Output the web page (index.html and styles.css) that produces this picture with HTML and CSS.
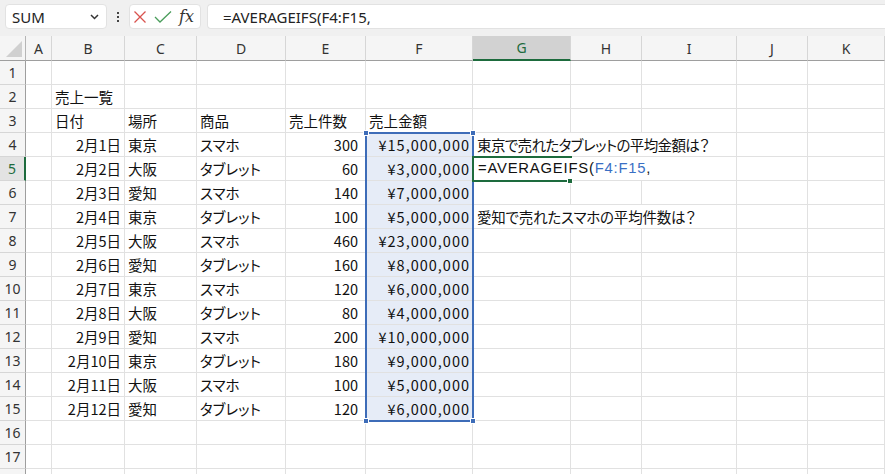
FILE: index.html
```html
<!DOCTYPE html>
<html lang="ja">
<head>
<meta charset="utf-8">
<link rel="stylesheet" href="styles.css">
</head>
<body>
<div class="app">
  <div class="fbar">
    <div class="namebox"><span>SUM</span>
      <svg class="chev" width="9" height="6" viewBox="0 0 9 6"><path d="M1 1l3.5 3.5L8 1" fill="none" stroke="#333" stroke-width="1.5"/></svg>
    </div>
    <div class="dots"><i></i><i></i><i></i></div>
    <div class="fxbox">
      <svg width="14" height="14" viewBox="0 0 14 14"><path d="M1.5 1.5l11 11M12.5 1.5l-11 11" stroke="#d9534f" stroke-width="1.3" fill="none"/></svg>
      <svg width="18" height="14" viewBox="0 0 18 14"><path d="M1 7l5 5L17 1.5" stroke="#4a9d5b" stroke-width="1.3" fill="none"/></svg>
      <span class="fx">fx</span>
    </div>
    <div class="formula">=AVERAGEIFS(F4:F15,</div>
  </div>
  <div class="sheet">
    <div class="grid">
      <div class="corner"><span class="tri"></span></div>
      <div class="ch">A</div><div class="ch">B</div><div class="ch">C</div><div class="ch">D</div><div class="ch">E</div><div class="ch">F</div><div class="ch hl">G</div><div class="ch">H</div><div class="ch">I</div><div class="ch">J</div><div class="ch">K</div>

      <div class="rh">1</div><div class="c"></div><div class="c"></div><div class="c"></div><div class="c"></div><div class="c"></div><div class="c"></div><div class="c"></div><div class="c"></div><div class="c"></div><div class="c"></div><div class="c"></div>

      <div class="rh">2</div><div class="c"></div><div class="c">売上一覧</div><div class="c"></div><div class="c"></div><div class="c"></div><div class="c"></div><div class="c"></div><div class="c"></div><div class="c"></div><div class="c"></div><div class="c"></div>

      <div class="rh">3</div><div class="c"></div><div class="c">日付</div><div class="c">場所</div><div class="c">商品</div><div class="c">売上件数</div><div class="c">売上金額</div><div class="c"></div><div class="c"></div><div class="c"></div><div class="c"></div><div class="c"></div>

      <div class="rh">4</div><div class="c"></div><div class="c r">2月1日</div><div class="c">東京</div><div class="c">スマホ</div><div class="c r e">300</div><div class="c r f sel">¥15,000,000</div><div class="c span3 q1">東京で売れたタブレットの平均金額は？</div><div class="c"></div><div class="c"></div>

      <div class="rh hlr">5</div><div class="c"></div><div class="c r">2月2日</div><div class="c">大阪</div><div class="c">タブレット</div><div class="c r e">60</div><div class="c r f sel">¥3,000,000</div><div class="c span3 edit">=AVERAGEIFS(<span class="ref">F4:F15</span>,</div><div class="c"></div><div class="c"></div>

      <div class="rh">6</div><div class="c"></div><div class="c r">2月3日</div><div class="c">愛知</div><div class="c">スマホ</div><div class="c r e">140</div><div class="c r f sel">¥7,000,000</div><div class="c"></div><div class="c"></div><div class="c"></div><div class="c"></div><div class="c"></div>

      <div class="rh">7</div><div class="c"></div><div class="c r">2月4日</div><div class="c">東京</div><div class="c">タブレット</div><div class="c r e">100</div><div class="c r f sel">¥5,000,000</div><div class="c span3 q2">愛知で売れたスマホの平均件数は？</div><div class="c"></div><div class="c"></div>

      <div class="rh">8</div><div class="c"></div><div class="c r">2月5日</div><div class="c">大阪</div><div class="c">スマホ</div><div class="c r e">460</div><div class="c r f sel">¥23,000,000</div><div class="c"></div><div class="c"></div><div class="c"></div><div class="c"></div><div class="c"></div>

      <div class="rh">9</div><div class="c"></div><div class="c r">2月6日</div><div class="c">愛知</div><div class="c">タブレット</div><div class="c r e">160</div><div class="c r f sel">¥8,000,000</div><div class="c"></div><div class="c"></div><div class="c"></div><div class="c"></div><div class="c"></div>

      <div class="rh">10</div><div class="c"></div><div class="c r">2月7日</div><div class="c">東京</div><div class="c">スマホ</div><div class="c r e">120</div><div class="c r f sel">¥6,000,000</div><div class="c"></div><div class="c"></div><div class="c"></div><div class="c"></div><div class="c"></div>

      <div class="rh">11</div><div class="c"></div><div class="c r">2月8日</div><div class="c">大阪</div><div class="c">タブレット</div><div class="c r e">80</div><div class="c r f sel">¥4,000,000</div><div class="c"></div><div class="c"></div><div class="c"></div><div class="c"></div><div class="c"></div>

      <div class="rh">12</div><div class="c"></div><div class="c r">2月9日</div><div class="c">愛知</div><div class="c">スマホ</div><div class="c r e">200</div><div class="c r f sel">¥10,000,000</div><div class="c"></div><div class="c"></div><div class="c"></div><div class="c"></div><div class="c"></div>

      <div class="rh">13</div><div class="c"></div><div class="c r">2月10日</div><div class="c">東京</div><div class="c">タブレット</div><div class="c r e">180</div><div class="c r f sel">¥9,000,000</div><div class="c"></div><div class="c"></div><div class="c"></div><div class="c"></div><div class="c"></div>

      <div class="rh">14</div><div class="c"></div><div class="c r">2月11日</div><div class="c">大阪</div><div class="c">スマホ</div><div class="c r e">100</div><div class="c r f sel">¥5,000,000</div><div class="c"></div><div class="c"></div><div class="c"></div><div class="c"></div><div class="c"></div>

      <div class="rh">15</div><div class="c"></div><div class="c r">2月12日</div><div class="c">愛知</div><div class="c">タブレット</div><div class="c r e">120</div><div class="c r f sel">¥6,000,000</div><div class="c"></div><div class="c"></div><div class="c"></div><div class="c"></div><div class="c"></div>

      <div class="rh">16</div><div class="c"></div><div class="c"></div><div class="c"></div><div class="c"></div><div class="c"></div><div class="c"></div><div class="c"></div><div class="c"></div><div class="c"></div><div class="c"></div><div class="c"></div>

      <div class="rh">17</div><div class="c"></div><div class="c"></div><div class="c"></div><div class="c"></div><div class="c"></div><div class="c"></div><div class="c"></div><div class="c"></div><div class="c"></div><div class="c"></div><div class="c"></div>

      <div class="rh"></div><div class="c"></div><div class="c"></div><div class="c"></div><div class="c"></div><div class="c"></div><div class="c"></div><div class="c"></div><div class="c"></div><div class="c"></div><div class="c"></div><div class="c"></div>
    </div>
    <div class="range"><i class="h tl"></i><i class="h tr"></i><i class="h bl"></i><i class="h br"></i></div>
    <div class="active"><i class="fill"></i></div>
  </div>
</div>
</body>
</html>
```

FILE: styles.css
```css
* { box-sizing: border-box; }
html, body { margin: 0; padding: 0; }
body {
  width: 885px;
  height: 474px;
  overflow: hidden;
  background: #fff;
  font-family: "Noto Sans CJK JP", "Noto Sans", sans-serif;
}
.app { width: 885px; height: 474px; overflow: hidden; }

/* formula bar */
.fbar {
  height: 36px;
  background: #f0f0f0;
  display: flex;
  align-items: center;
  padding: 4px 0 7px 5px;
}
.namebox {
  width: 102px;
  height: 25px;
  background: #fff;
  border: 1px solid #e2e2e2;
  border-radius: 4px;
  display: flex;
  align-items: center;
  justify-content: space-between;
  padding: 0 7px 0 6px;
  font-family: "Noto Sans", sans-serif;
  font-size: 15px;
  color: #222;
}
.dots {
  width: 22px;
  display: flex;
  flex-direction: column;
  align-items: center;
  gap: 2px;
}
.dots i { width: 2px; height: 2px; background: #444; display: block; }
.fxbox {
  width: 72px;
  height: 25px;
  background: #fff;
  border: 1px solid #e2e2e2;
  border-radius: 4px;
  display: flex;
  align-items: center;
  gap: 7px;
  padding: 0 0 0 3px;
}
.fx {
  font-family: "DejaVu Serif", "Liberation Serif", serif;
  font-style: italic;
  font-size: 16px;
  color: #333;
}
.formula {
  flex: 1;
  margin-left: 6px;
  height: 25px;
  background: #fff;
  border: 1px solid #e2e2e2;
  border-right: none;
  border-radius: 4px 0 0 4px;
  padding-left: 15px;
  display: flex;
  align-items: center;
  font-family: "Noto Sans", sans-serif;
  font-size: 15px;
  color: #222;
}

/* sheet */
.sheet { position: relative; }
.grid {
  display: grid;
  grid-template-columns: 26px 26px 73px 72px 89px 80px 107px 98px 71px 95px 71px 77px;
  grid-template-rows: 25px repeat(18, 24px);
}
.corner {
  background: #f5f5f5;
  border-right: 1px solid #b5b5b5;
  border-bottom: 1px solid #9e9e9e;
  position: relative;
}
.tri {
  position: absolute;
  right: 3px;
  bottom: 3px;
  width: 0;
  height: 0;
  border-left: 16px solid transparent;
  border-bottom: 16px solid #d0d0d0;
}
.ch {
  background: #f5f5f5;
  border-right: 1px solid #d6d6d6;
  border-bottom: 1px solid #9e9e9e;
  display: flex;
  align-items: center;
  justify-content: center;
  font-family: "Noto Sans", sans-serif;
  font-size: 14px;
  color: #333;
}
.ch.hl {
  background: #d2d2d2;
  color: #1d6b3d;
  border-bottom: 2px solid #1d6b3d;
}
.rh {
  background: #f5f5f5;
  border-right: 1px solid #9e9e9e;
  border-bottom: 1px solid #d6d6d6;
  display: flex;
  align-items: center;
  justify-content: center;
  font-family: "Noto Sans", sans-serif;
  font-size: 14px;
  color: #333;
}
.rh.hlr {
  background: #e3e3e3;
  color: #1d6b3d;
  border-right: 2px solid #1d6b3d;
}
.c {
  border-right: 1px solid #e1e1e1;
  border-bottom: 1px solid #e1e1e1;
  display: flex;
  align-items: center;
  padding: 0 3px 1px 3px;
  font-size: 14.5px;
  color: #111;
  white-space: nowrap;
  font-feature-settings: "palt";
  overflow: visible;
}
.c.r { justify-content: flex-end; }
.c.e { padding-right: 7px; }
.c.f { letter-spacing: 1px; padding-right: 2px; }
.c.sel { background: #e6ecf7; }
.c.span3 { grid-column: span 3; padding-left: 4px; }
.c.q1 { letter-spacing: -0.6px; }
.c.q2 { letter-spacing: -0.2px; }
.c.edit {
  font-family: "Liberation Sans", "Noto Sans CJK JP", sans-serif;
  font-size: 14.8px;
  letter-spacing: 0.8px;
  padding-left: 5px;
}
.edit .ref { color: #3a6fc4; }

/* overlays */
.range {
  position: absolute;
  left: 365px;
  top: 96px;
  width: 109px;
  height: 290px;
  border: 2px solid #3d6cb8;
}
.range .h {
  position: absolute;
  width: 6px;
  height: 6px;
  background: #3d6cb8;
  border: 1px solid #fff;
}
.h.tl { left: -4px; top: -4px; }
.h.tr { right: -4px; top: -4px; }
.h.bl { left: -4px; bottom: -4px; }
.h.br { right: -4px; bottom: -4px; }
.active {
  position: absolute;
  left: 472px;
  top: 120px;
  width: 100px;
  height: 26px;
  border: 2px solid #1d6b3d;
  border-right: none;
}
.active .fill {
  position: absolute;
  right: -1px;
  bottom: -4px;
  width: 6px;
  height: 6px;
  background: #1d6b3d;
  border: 1px solid #fff;
}
```
